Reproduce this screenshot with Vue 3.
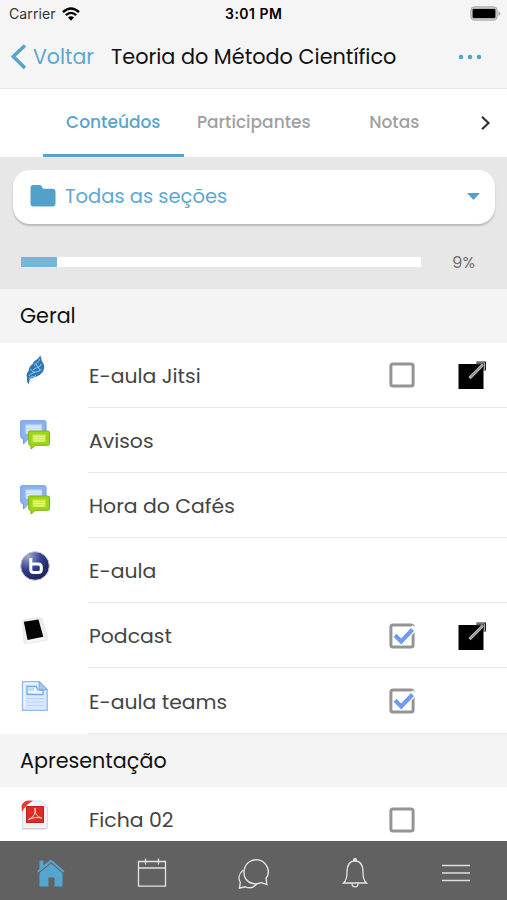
<template>
  <div class="screen">
    <header class="top">
      <div class="status">
        <span class="carrier">Carrier</span>
        <svg class="wifi" width="18" height="14" viewBox="0 0 18 14">
          <path d="M1 5.2Q9-2 17 5.2" fill="none" stroke="#000" stroke-width="2.4" />
          <path d="M3.8 8.2Q9 3.6 14.2 8.2" fill="none" stroke="#000" stroke-width="2.3" />
          <path d="M6 10.6Q9 8 12 10.6L9 13.7z" />
        </svg>
        <span class="clock">3:01 PM</span>
        <svg class="battery" width="31" height="15" viewBox="0 0 31 15">
          <rect x="1" y="1" width="26" height="13" rx="3.5" fill="#ececec" stroke="#b0b0b0" stroke-width="1.5" />
          <rect x="2.500" y="2.800" width="23" height="9.400" rx="1.2" fill="#000" />
          <path d="M28.3 5v5Q30.5 9 30.5 7.5T28.3 5z" fill="#b0b0b0" />
        </svg>
      </div>
      <div class="navbar">
        <button class="back">
          <svg width="17" height="26" viewBox="0 0 17 26">
            <path d="M14 1.5L2.2 12.500l11.8 11.500" fill="none" stroke="#56a3cb" stroke-width="3.5" />
          </svg>
          <span>Voltar</span>
        </button>
        <h1>Teoria do Método Científico</h1>
        <svg class="more" width="24" height="6" viewBox="0 0 24 6" fill="#56a3cb">
          <circle cx="3" cy="3" r="2.3" />
          <circle cx="12" cy="3" r="2.3" />
          <circle cx="21" cy="3" r="2.3" />
        </svg>
      </div>
    </header>

    <nav class="tabs">
      <button
        v-for="tab in tabs"
        :key="tab.id"
        :class="['tab', { active: tab.id === activeTab }]"
        @click="activeTab = tab.id"
      >{{ tab.title }}</button>
      <svg class="next" width="11" height="16" viewBox="0 0 11 16">
        <path d="M2 1.8L8.5 8 2 14.2" fill="none" stroke="#333" stroke-width="2.2" />
      </svg>
    </nav>

    <div class="filter">
      <button class="select">
        <svg width="26" height="22" viewBox="0 0 26 22">
          <path d="M3.500 0h6q1.500 0 2.200 1.300l1.200 2.400h9.600q3 0 3 3v11.800q0 3-3 3h-19q-3 0-3-3V3q0-3 3-3z" fill="#52a1c9" />
        </svg>
        <span>Todas as seções</span>
        <svg class="arrow" width="13" height="7" viewBox="0 0 13 7">
          <path d="M0 0h13L6.500 7z" fill="#52a1c9" />
        </svg>
      </button>
      <div class="progress">
        <div class="track">
          <div class="bar" :style="{ width: progress + '%' }"></div>
        </div>
        <span>{{ progress }}%</span>
      </div>
    </div>

    <main>
      <section v-for="section in sections" :key="section.title">
        <h2>{{ section.title }}</h2>
        <div v-for="item in section.items" :key="item.title" class="row">
          <div class="icon">
            <svg v-if="item.icon === 'jitsi'" width="30" height="30" viewBox="0 0 30 30">
              <path d="M20 .5c2 2 .8 4.500 2.500 6.500 2.300 3 2.400 7-.2 10.500-3 4-8.300 4.500-12.300 6.500L8.500 29.500C7 27 6.500 25 7 22.500c-1-2.500 0-5 1.500-6.500.5-4 2-5.500 4.500-7.500 1.200-4 5.500-3.500 7-8z" fill="#2e76b5" />
              <path d="M19.500 4c.5 3-5 4-5 7M21 9c0 3.500-6 3-8 6.500M21.500 14c-2.500 4-9 2-12.500 7M10.500 14c1 2 2 3 4 3M16 9l4 6M9 24c2-4 5-1 7-4" fill="none" stroke="#a5d5f0" stroke-width=".9" />
            </svg>
            <svg v-else-if="item.icon === 'forum'" width="30" height="30" viewBox="0 0 30 30">
              <path d="M1.500.7h23q1.500 0 1.500 1.500v14q0 2-2 2H9L3.500 24v-5Q.7 18.500.7 16V2Q.7.700 1.500.700z" fill="#8db2ee" stroke="#719ade" />
              <path d="M5.500 4.500H22v9H5.500z" fill="#c6dcfb" />
              <path d="M6 7h15M6 10h15M6 13h15" stroke="#e8f4ff" />
              <path d="M9.500 11h18.300q1.700 0 1.700 1.700v10.600q0 2-1.700 2H15.500L11 29v-3.500q-2.300 0-2.300-2V12q0-1 .8-1z" fill="#9ed51a" stroke="#75b40c" />
              <path d="M12.500 14.500h13.300v7.300H12.500z" fill="#c7ec42" />
              <path d="M13.500 16.500h11M13.500 18.700h11M13.500 21h11" stroke="#efff9c" />
            </svg>
            <svg v-else-if="item.icon === 'bbb'" width="30" height="30" viewBox="0 0 30 30">
              <defs>
                <radialGradient id="ball" cx=".25" cy=".15" r=".8">
                  <stop offset="0" stop-color="#a0abd6" />
                  <stop offset=".6" stop-color="#35408b" />
                  <stop offset="1" stop-color="#20295f" />
                </radialGradient>
              </defs>
              <circle cx="15" cy="15" r="14.300" fill="url(#ball)" stroke="#c3c6d8" />
              <path d="M10.800 7v11.500q0 3 3 3h4.500q3 0 3-3v-2.600q0-3-3-3H12" fill="none" stroke="#fff" stroke-width="3" />
            </svg>
            <svg v-else-if="item.icon === 'podcast'" width="30" height="30" viewBox="0 0 30 30">
              <path d="M2 6.500Q2 3.500 5 3L19 .800q3-.3 4 2.700l5 17.500q.5 3-2.500 4L7 28q-3 .500-4-2.500z" fill="#ececec" />
              <path d="M4 6l15-2.500 6 20L6.500 27z" fill="#f7f7f7" />
              <path d="M3.800 5.800L18.500 3.500l4.800 17.300-15.800 3.200z" fill="#050505" />
            </svg>
            <svg v-else-if="item.icon === 'page'" width="30" height="30" viewBox="0 0 30 30">
              <path d="M2.500.7h16.700l8 8v20.600H2.500z" fill="#d5eaff" stroke="#95b9e8" stroke-width="1.300" />
              <path d="M4 2.500h13.500M4.200 4v23.500" stroke="#edf7ff" stroke-width="1.500" />
              <path d="M19.200.7v8h8z" fill="#a6c9f3" stroke="#7fa8df" />
              <path d="M7 5.500h9l2 3.500 5 .5v4H7z" fill="#eef7ff" stroke="#7fa8df" stroke-width="1.300" />
              <path d="M8 6.500h6v3.500H8z" fill="#bce0ff" />
              <path d="M8 12.800h4.500" stroke="#e7b57c" />
              <path d="M6.500 17.500h17.500M6.500 21h17.500M6.500 24.500h17.500" stroke="#b9d4f4" />
            </svg>
            <svg v-else width="30" height="30" viewBox="0 0 30 30">
              <path d="M10 1h11l6.500 6v20q0 2-2 2H2.500V9z" fill="#f1f2f4" stroke="#dcdde1" />
              <path d="M2 28.700h24.500" stroke="#c8c9cd" />
              <path d="M1.500 6Q3 1 8 .5l5 .2Q5.500 4.500 2 12z" fill="#e53c30" />
              <path d="M6.500 6.500h17v16h-17z" fill="#df2b26" stroke="#bd211d" />
              <path d="M8.500 19.500c5.500-2.500 7.500-7 6.500-11.500-.5 6 3 9.500 7 10-5-1-9-.5-13.500 1.500" fill="none" stroke="#ffd9d5" stroke-width="1" />
            </svg>
          </div>
          <span class="label">{{ item.title }}</span>
          <svg v-if="item.check" class="check" width="26" height="26" viewBox="0 0 26 26">
            <rect x="1.900" y="1.900" width="22.200" height="22.200" rx="2" fill="#fff" stroke="#949494" stroke-width="3" />
            <template v-if="item.check === 'done'">
              <path d="M7 12.500l5.200 5.500L26 4.500" fill="none" stroke="#fff" stroke-width="6.500" />
              <path d="M6 12.300l6.200 6.200L23.500 6.500" fill="none" stroke="#6f9bf2" stroke-width="4.200" />
            </template>
          </svg>
          <svg v-if="item.link" class="link" width="28" height="28" viewBox="0 0 28 28">
            <path d="M.5 3h25v25H.5z" />
            <path d="M12 17.500L25.500 4M18.500 2.200H27v7.300" fill="none" stroke="#222" stroke-width="3.400" />
            <path d="M11.500 17L25 3.500" stroke="#d4d4d4" stroke-width="2.600" />
            <path d="M12 16.500L25 3.500" stroke="#222" stroke-width=".7" />
            <path d="M19 1.900h7.500v7" fill="none" stroke="#aaa" stroke-width="1" />
          </svg>
        </div>
      </section>
    </main>

    <footer>
      <svg width="30" height="30" viewBox="0 0 30 30" fill="#55a5ce">
        <path d="M3.500 2.500h4v4.700L15 1.500 28.500 13l-1.200 1.400L15 4.200 2.500 14.400 1.300 13l2.200-2z" />
        <path d="M15 5.600L26.500 15v13.500h-8V19.500h-6v9h-9V15z" />
      </svg>
      <svg width="30" height="30" viewBox="0 0 30 30" fill="none" stroke="#e3e3e3" stroke-width="1.300">
        <path d="M1.500 3.500h27v24.700h-27zM1.500 10h27M8.500.5v6M21.500.500v6" />
      </svg>
      <svg width="32" height="32" viewBox="0 0 32 32" fill="none" stroke="#e3e3e3" stroke-width="1.400">
        <path d="M8.700 22C5.300 16.500 7 8 12.800 4.500c5-3.200 12-2 15.700 2.600 3.500 4.600 3.500 10 .6 14.300l.7 6.100-5.600-1.800c-5.500 2.400-12 1.100-15.500-3.700z" />
        <path d="M6.300 13c-4.500 3.500-5.200 8.500-3 12.500L2.500 31l5.800-1.200c4.700 1.800 9 .6 11.500-3.300" />
      </svg>
      <svg width="28" height="30" viewBox="0 0 28 30" fill="none" stroke="#e3e3e3" stroke-width="1.300">
        <path d="M2.500 25q3.500-3 3.500-10.500C6 7 8.500 2.800 14 2.800S22 7 22 14.500q0 7.500 3.500 10.500zM11 25.500q0 3.300 3 3.300t3-3.300" />
        <circle cx="14" cy="1.900" r="1.300" fill="#e3e3e3" />
      </svg>
      <svg width="28" height="30" viewBox="0 0 28 30" stroke="#dedede" stroke-width="1.600">
        <path d="M0 7.500h28M0 15h28M0 22.500h28" />
      </svg>
    </footer>
  </div>
</template>

<script setup>
  import { ref } from 'vue'

  const activeTab = ref('contents')
  const progress = ref(9)

  const tabs = [
    { id: 'contents', title: 'Conteúdos' },
    { id: 'people', title: 'Participantes' },
    { id: 'grades', title: 'Notas' },
  ]

  const sections = [
    {
      title: 'Geral',
      items: [
        { title: 'E-aula Jitsi', icon: 'jitsi', check: 'empty', link: true },
        { title: 'Avisos', icon: 'forum' },
        { title: 'Hora do Cafés', icon: 'forum' },
        { title: 'E-aula', icon: 'bbb' },
        { title: 'Podcast', icon: 'podcast', check: 'done', link: true },
        { title: 'E-aula teams', icon: 'page', check: 'done' },
      ],
    },
    {
      title: 'Apresentação',
      items: [
        { title: 'Ficha 02', icon: 'pdf', check: 'empty' },
      ],
    },
  ]
</script>

<style>
  body {
    margin: 0;
  }
</style>

<style scoped>
  .screen {
    width: 507px;
    height: 900px;
    display: flex;
    flex-direction: column;
    overflow: hidden;
    background-color: #fff;
    font-family: Poppins, Inter, sans-serif;
  }

  button {
    border: none;
    padding: 0;
    background: none;
    font: inherit;
    cursor: pointer;
  }

  h1, h2 {
    margin: 0;
    font-weight: 400;
  }

  svg {
    flex: none;
    display: block;
  }

  .top {
    height: 89px;
    flex: none;
    background-color: #f5f5f5;
    border-bottom: 1px solid #e4e4e4;
    box-sizing: border-box;
  }

  .status {
    height: 27px;
    display: grid;
    grid-template-columns: 47px 169px 1fr auto;
    align-items: center;
    padding: 0 6px 0 9px;
    font-family: Inter, sans-serif;
    font-size: 14px;
  }

  .carrier {
    color: #333;
    letter-spacing: 0.1px;
  }

  .wifi {
    margin-left: 6px;
  }

  .clock {
    font-weight: 600;
    letter-spacing: 0.5px;
  }

  .navbar {
    height: 59px;
    display: flex;
    align-items: center;
    padding: 0 25px 0 11px;
  }

  .back {
    display: flex;
    align-items: center;
    gap: 5px;
    width: 100px;
    color: #5ca8d0;
    font-size: 20.500px;
  }

  h1 {
    flex: 1;
    font-size: 20.800px;
    color: #111;
    white-space: nowrap;
  }

  .tabs {
    height: 68px;
    flex: none;
    display: flex;
    align-items: center;
    padding: 0 16px 0 43px;
    background-color: #fff;
  }

  .tab {
    width: 140.500px;
    height: 68px;
    box-sizing: border-box;
    border-bottom: 3px solid transparent;
    color: #a0a0a0;
    font-size: 17px;
    font-weight: 500;
  }

  .tab.active {
    color: #56a5cd;
    border-color: #56a5c8;
  }

  .next {
    margin-left: auto;
  }

  .filter {
    height: 132px;
    flex: none;
    box-sizing: border-box;
    padding: 13px 12px 0 13px;
    background-color: #e7e7e7;
  }

  .select {
    width: 100%;
    height: 54px;
    display: flex;
    align-items: center;
    gap: 9px;
    padding: 0 15px 2px 17px;
    border-radius: 17px;
    background-color: #fff;
    box-shadow: 0 2px 2px rgba(0, 0, 0, 0.2);
    color: #5ca8d0;
    font-size: 19.500px;
  }

  .arrow {
    margin-left: auto;
  }

  .progress {
    height: 24px;
    display: flex;
    align-items: center;
    padding: 0 20px 0 8px;
    margin-top: 26px;
    color: #737373;
    font-size: 16.500px;
    justify-content: space-between;
  }

  .track {
    width: 400px;
    height: 10px;
    background-color: #fff;
  }

  .bar {
    height: 10px;
    background-color: #78b5d5;
  }

  main {
    flex: 1;
    min-height: 0;
    overflow: hidden;
  }

  h2 {
    height: 53.500px;
    display: flex;
    align-items: center;
    padding-left: 20px;
    background-color: #f4f4f4;
    color: #111;
    font-size: 20.700px;
  }

  .row {
    height: 65.200px;
    display: grid;
    grid-template-columns: 69px 300px 69px 1fr;
    align-items: center;
    padding-left: 20px;
    background: linear-gradient(#e8e8e8, #e8e8e8) 88px 100% / 100% 1px no-repeat;
  }

  .icon {
    padding-bottom: 10px;
  }

  .label {
    padding-top: 1px;
    color: #444;
    font-size: 20.400px;
  }

  .check {
    grid-column: 3;
  }

  .link {
    grid-column: 4;
  }

  footer {
    height: 59px;
    flex: none;
    display: grid;
    grid-template-columns: repeat(5, 1fr);
    align-items: center;
    justify-items: center;
    box-sizing: border-box;
    padding-top: 4px;
    background-color: #616161;
  }
</style>
